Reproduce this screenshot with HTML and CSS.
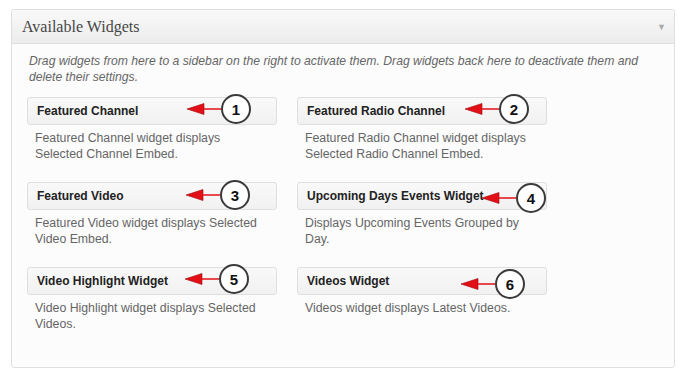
FILE: index.html
```html
<!DOCTYPE html>
<html lang="en">
<head>
    <meta charset="UTF-8">
    <title>Available Widgets</title>
    <link rel="stylesheet" href="styles.css">
</head>
<body>
    <div class="panel">
        <div class="panel-header">
            <h3>Available Widgets</h3>
            <span class="toggle">&#9660;</span>
        </div>
        <div class="panel-body">
            <p class="intro">Drag widgets from here to a sidebar on the right to activate them. Drag widgets back here to deactivate them and delete their settings.</p>
            <div class="widget-grid">
                <div class="widget">
                    <div class="widget-title">Featured Channel</div>
                    <p class="widget-desc">Featured Channel widget displays Selected Channel Embed.</p>
                    <div class="callout callout-1">
                        <svg width="35" height="12" viewBox="0 0 35 12"><path d="M1 6 L18 0.5 L18 11.5 Z" fill="#e30f16" stroke="#a0070c" stroke-width="0.6"/><line x1="18" y1="6" x2="35" y2="6" stroke="#e30f16" stroke-width="1.5"/></svg>
                        <span class="num">1</span>
                    </div>
                </div>
                <div class="widget">
                    <div class="widget-title">Featured Radio Channel</div>
                    <p class="widget-desc">Featured Radio Channel widget displays Selected Radio Channel Embed.</p>
                    <div class="callout callout-2">
                        <svg width="35" height="12" viewBox="0 0 35 12"><path d="M1 6 L18 0.5 L18 11.5 Z" fill="#e30f16" stroke="#a0070c" stroke-width="0.6"/><line x1="18" y1="6" x2="35" y2="6" stroke="#e30f16" stroke-width="1.5"/></svg>
                        <span class="num">2</span>
                    </div>
                </div>
                <div class="widget">
                    <div class="widget-title">Featured Video</div>
                    <p class="widget-desc">Featured Video widget displays Selected Video Embed.</p>
                    <div class="callout callout-3">
                        <svg width="35" height="12" viewBox="0 0 35 12"><path d="M1 6 L18 0.5 L18 11.5 Z" fill="#e30f16" stroke="#a0070c" stroke-width="0.6"/><line x1="18" y1="6" x2="35" y2="6" stroke="#e30f16" stroke-width="1.5"/></svg>
                        <span class="num">3</span>
                    </div>
                </div>
                <div class="widget">
                    <div class="widget-title">Upcoming Days Events Widget</div>
                    <p class="widget-desc">Displays Upcoming Events Grouped by Day.</p>
                    <div class="callout callout-4">
                        <svg width="35" height="12" viewBox="0 0 35 12"><path d="M1 6 L18 0.5 L18 11.5 Z" fill="#e30f16" stroke="#a0070c" stroke-width="0.6"/><line x1="18" y1="6" x2="35" y2="6" stroke="#e30f16" stroke-width="1.5"/></svg>
                        <span class="num">4</span>
                    </div>
                </div>
                <div class="widget">
                    <div class="widget-title">Video Highlight Widget</div>
                    <p class="widget-desc">Video Highlight widget displays Selected Videos.</p>
                    <div class="callout callout-5">
                        <svg width="35" height="12" viewBox="0 0 35 12"><path d="M1 6 L18 0.5 L18 11.5 Z" fill="#e30f16" stroke="#a0070c" stroke-width="0.6"/><line x1="18" y1="6" x2="35" y2="6" stroke="#e30f16" stroke-width="1.5"/></svg>
                        <span class="num">5</span>
                    </div>
                </div>
                <div class="widget">
                    <div class="widget-title">Videos Widget</div>
                    <p class="widget-desc">Videos widget displays Latest Videos.</p>
                    <div class="callout callout-6">
                        <svg width="35" height="12" viewBox="0 0 35 12"><path d="M1 6 L18 0.5 L18 11.5 Z" fill="#e30f16" stroke="#a0070c" stroke-width="0.6"/><line x1="18" y1="6" x2="35" y2="6" stroke="#e30f16" stroke-width="1.5"/></svg>
                        <span class="num">6</span>
                    </div>
                </div>
            </div>
        </div>
    </div>
</body>
</html>
```

FILE: styles.css
```css
* {
    margin: 0;
    padding: 0;
    box-sizing: border-box;
}

body {
    background: #fff;
    font-family: "Liberation Sans", Arial, sans-serif;
    padding: 9px 11px 0 11px;
}

.panel {
    width: 664px;
    border: 1px solid #dfdfdf;
    border-radius: 3px;
    background: #fcfcfc;
}

.panel-header {
    display: flex;
    justify-content: space-between;
    align-items: center;
    height: 34px;
    padding: 0 10px;
    border-bottom: 1px solid #dfdfdf;
    background: linear-gradient(#f9f9f9, #ececec);
    border-radius: 3px 3px 0 0;
}

.panel-header h3 {
    font-family: "Liberation Serif", "Times New Roman", serif;
    font-weight: normal;
    font-size: 16px;
    color: #464646;
}

.toggle {
    font-size: 9px;
    color: #aaa;
    margin-right: -2px;
}

.panel-body {
    padding: 9px 15px 35px 15px;
}

.intro {
    font-size: 12.2px;
    font-style: italic;
    line-height: 16px;
    color: #666;
    padding: 0 2px;
    margin-bottom: 12px;
}

.widget-grid {
    display: grid;
    grid-template-columns: 250px 250px;
    column-gap: 20px;
    row-gap: 20px;
}

.widget {
    position: relative;
}

.widget-title {
    height: 28px;
    line-height: 26px;
    padding: 0 9px;
    border: 1px solid #dfdfdf;
    border-radius: 3px;
    background: linear-gradient(#f9f9f9, #f1f1f1);
    font-size: 12px;
    font-weight: bold;
    color: #222;
}

.widget-desc {
    width: 228px;
    min-height: 32px;
    margin: 5px 0 0 8px;
    font-size: 12.3px;
    line-height: 16px;
    color: #666;
}

.callout {
    position: absolute;
    display: flex;
    align-items: center;
}

.callout svg {
    display: block;
}

.num {
    width: 30px;
    height: 30px;
    border: 2px solid #3a3a3a;
    border-radius: 50%;
    background: #fff;
    display: flex;
    justify-content: center;
    align-items: center;
    font-size: 15px;
    font-weight: bold;
    color: #111;
}

.callout-1 { left: 159px; top: -3px; }
.callout-2 { left: 167px; top: -3px; }
.callout-3 { left: 158px; top: -2px; }
.callout-4 { left: 184px; top: 1px; }
.callout-5 { left: 157px; top: -3px; }
.callout-6 { left: 163px; top: 2px; }
```
